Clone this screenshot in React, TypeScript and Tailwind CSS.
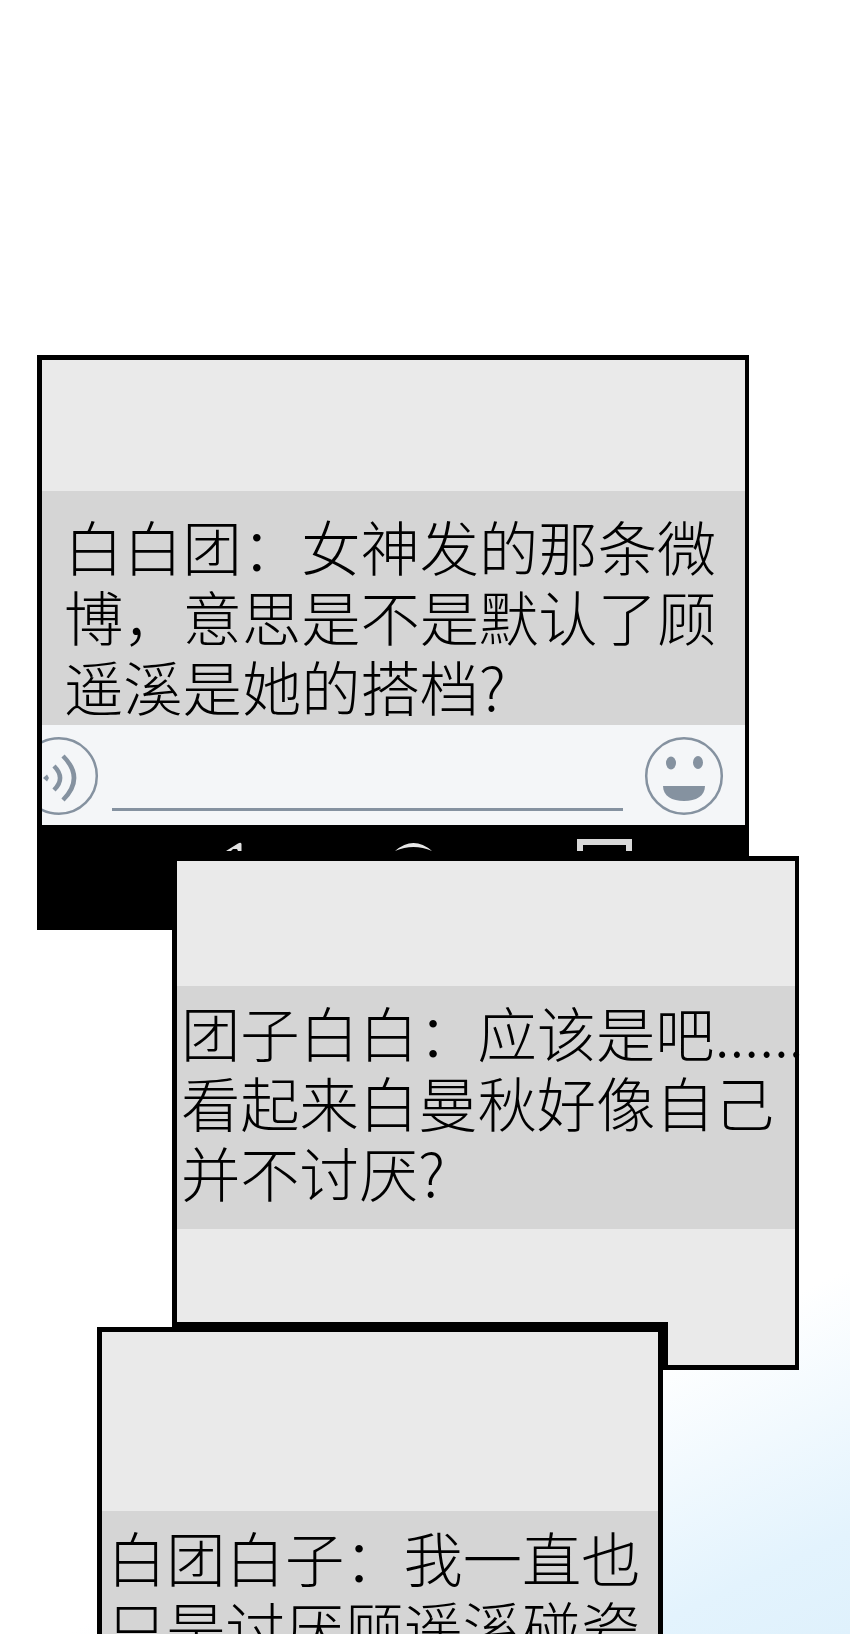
const cjk = "font-['Noto_Sans_CJK_SC','Noto_Sans',sans-serif] font-light";

const Lines = ({ lines, className }: { lines: string[]; className: string }) => (
  <div className={`${cjk} text-[59.300px] leading-[70px] text-black whitespace-nowrap ${className}`}>
    {lines.map((l, i) => <div key={i}>{l}</div>)}
  </div>
);

export default function App() {
  return (
    <div className="h-[1634px] w-[850px] overflow-hidden bg-[linear-gradient(155deg,#ffffff_82%,#e3f3fd_95%,#dff1fc_100%)]">
      <div className="h-[355px]" />

      {/* Panel 1 - chat with input bar and android nav */}
      <div className="ml-[37px] flex h-[575px] w-[712px] flex-col border-[5px] border-r-[4px] border-b-0 border-black bg-black">
        <div className="h-[131px] bg-[#eaeaea]" />
        <Lines
          className="h-[234px] bg-[#d5d5d5] pl-[22px] pt-[19px]"
          lines={['白白团\uFF1A女神发的那条微', '博\uFF0C意思是不是默认了顾', '遥溪是她的搭档?']}
        />
        <div className="flex h-[100px] items-start overflow-hidden bg-[#f4f6f8]">
          <svg width="60" height="80" viewBox="0 0 60 80" className="mt-[11px] shrink-0" fill="none" stroke="#8592a0">
            <circle cx="17" cy="40" r="37.800" strokeWidth="2.500" />
            <path d="M1 42 L5 38.500 L7 42 L5 45.500 Z" fill="#8592a0" stroke="none" />
            <path d="M12 30 Q24 42 12 54" strokeWidth="4.500" />
            <path d="M21 20 Q43 42 21 64" strokeWidth="4.500" />
          </svg>
          <div className="ml-[10px] mt-[83px] h-[3px] w-[511px] bg-[#8592a0]" />
          <svg width="80" height="80" viewBox="0 0 80 80" className="ml-[21px] mt-[11px] shrink-0">
            <circle cx="40" cy="40" r="37.800" fill="none" stroke="#8592a0" strokeWidth="2.500" />
            <ellipse cx="27" cy="27" rx="5" ry="6.500" fill="#8592a0" />
            <ellipse cx="54" cy="26.500" rx="5" ry="6.500" fill="#8592a0" />
            <path d="M19 50 H61 C61 60 52 65 40 65 C28 65 19 60 19 50 Z" fill="#8592a0" />
          </svg>
        </div>
        <div className="flex h-[26px] items-start overflow-hidden">
          <svg width="18" height="10" viewBox="0 0 18 10" className="ml-[184px] mt-[17px] shrink-0">
            <path d="M0 9 L12 1.500 Q15 0 15.500 2 V9 H12 L11 7 H7 L5 9 Z" fill="#e2e2e2" />
          </svg>
          <svg width="40" height="10" viewBox="0 0 40 10" className="ml-[151px] mt-[18px] shrink-0">
            <path d="M0 8 Q18.500 -8 37 8 Q18.500 0 0 8 Z" fill="#e8e8e8" />
          </svg>
          <svg width="55" height="12" viewBox="0 0 55 12" className="ml-[142px] mt-[14px] shrink-0" fill="none">
            <path d="M3 12 V3 H52 V12" stroke="#d8d8d8" strokeWidth="6" />
          </svg>
        </div>
      </div>

      {/* Panel 2 */}
      <div className="relative ml-[172px] -mt-[74px] flex h-[514px] w-[627px] flex-col border-[5px] border-r-[4px] border-black bg-[#eaeaea]">
        <div className="h-[125px]" />
        <Lines
          className="h-[243px] bg-[#d5d5d5] pl-[4px] pt-[10px]"
          lines={['团子白白\uFF1A应该是吧......', '看起来白曼秋好像自己', '并不讨厌?']}
        />
      </div>

      {/* Panel 3 - runs off the bottom of the page */}
      <div className="relative ml-[97px] -mt-[43px] h-[400px] w-[566px] border-[5px] border-black bg-[#eaeaea]">
        <div className="absolute -top-[10px] left-[70px] h-[48px] w-[496px] border-r-[10px] border-t-[10px] border-black" />
        <div className="h-[179px]" />
        <Lines
          className="h-[216px] bg-[#d5d5d5] pl-[5px] pt-[10px]"
          lines={['白团白子\uFF1A我一直也', '只是讨厌顾遥溪碰瓷']}
        />
      </div>
    </div>
  );
}
